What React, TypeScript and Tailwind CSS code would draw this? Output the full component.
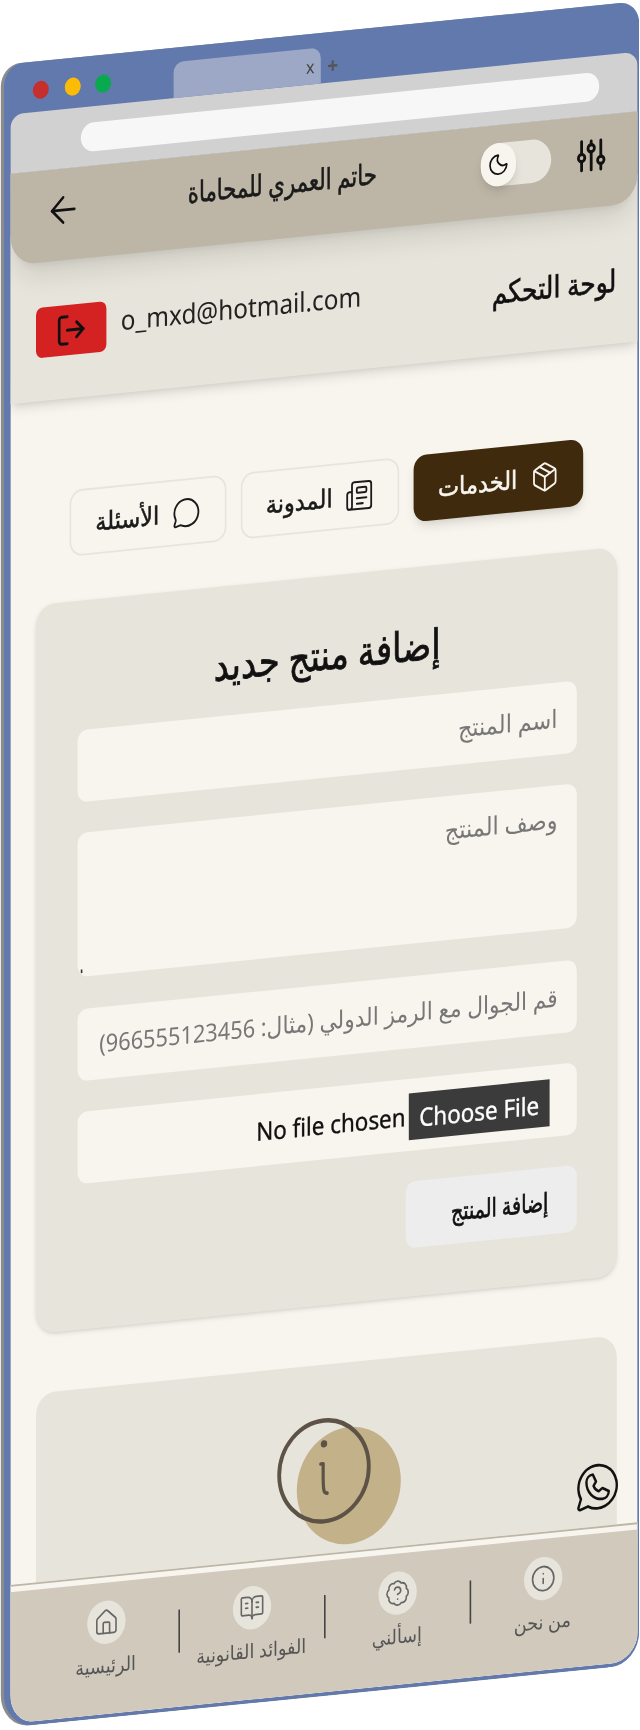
import { ArrowLeft, Moon, LogOut, Package, Newspaper, MessageCircle, House, BookOpenText, BadgeQuestionMark, Info } from "lucide-react";
import { PiWhatsappLogoLight } from "react-icons/pi";

const ar = "font-['Noto_Sans','DejaVu_Sans',sans-serif]";

function Tab({ icon, label, active, w }: { icon: React.ReactNode; label: string; active?: boolean; w: string }) {
  return (
    <div className={`flex h-[37px] items-center justify-center gap-2 rounded-lg ${w} ${active ? "bg-[#3f2a0e] text-[#f8f5ee] shadow-md" : "border border-[#e7e4db] text-[#1a1a1a]"}`}>
      {icon}
      <span className="text-[14px] [-webkit-text-stroke:0.3px_currentColor]">{label}</span>
    </div>
  );
}

function NavItem({ icon, label }: { icon: React.ReactNode; label: string }) {
  return (
    <div className="relative flex w-[90px] flex-col items-center">
      <div className="flex h-6 w-6 items-center justify-center rounded-full bg-[#e7e4db] text-[#666]">{icon}</div>
      <span className="text-[11px] leading-[24px] text-[#555]">{label}</span>
    </div>
  );
}

export default function App() {
  return (
    <div className="relative h-[1730px] w-[640px] overflow-hidden bg-white [filter:blur(0.3px)]">
      <div
        dir="rtl"
        className={`relative flex h-[924px] w-[397px] origin-top-left flex-col overflow-hidden rounded-t-[12px] rounded-b-[18px] border-r border-b-2 border-l-[4px] border-[#6279ad] bg-[#6279ad] shadow-[-2px_0_0_0_#8c8c8c] ${ar} [transform:matrix(1.6,-0.16,0,1.8,4,64.7)]`}
      >
        <div dir="ltr" className="relative h-[28px] shrink-0">
          <div className="absolute top-[11px] left-[14px] flex gap-[9.5px]">
            <span className="h-[10px] w-[10px] rounded-full bg-[#c5302f]" />
            <span className="h-[10px] w-[10px] rounded-full bg-[#fcbc05]" />
            <span className="h-[10px] w-[10px] rounded-full bg-[#0aa84f]" />
          </div>
          <div className="absolute top-[8px] left-[102px] flex h-[20px] w-[92px] items-center justify-end rounded-t-md bg-[#9ca8c5] pr-[4px] text-[10px] text-[#444]">x</div>
          <span className="absolute top-[10px] left-[198px] text-[12px] font-bold text-[#555]">+</span>
        </div>
        <div dir="ltr" className="flex h-[33px] shrink-0 items-start rounded-t-lg bg-[#d1d1d1] pt-[9px] pr-[24px] pl-[44px]">
          <div className="h-4 w-full rounded-full bg-[#f7f7f7]" />
        </div>
        <div className="relative flex flex-1 flex-col bg-[#f8f5ee]">
          <div dir="ltr" className="relative z-10 flex h-[51px] shrink-0 items-start rounded-b-2xl bg-[#bdb5a6] pt-[10px] shadow-lg">
            <ArrowLeft size={24} strokeWidth={1.5} className="absolute top-[11px] left-[21px] text-[#111]" />
            <div dir="rtl" className="absolute top-[8px] left-[99px] w-[130px] origin-right scale-x-[0.83] text-right text-[16px] leading-[24px] whitespace-nowrap text-[#1a1a1a] [-webkit-text-stroke:0.35px_currentColor]">حاتم العمري للمحاماة</div>
            <div className="absolute top-[10px] left-[294px] flex h-6 w-11 items-center rounded-full bg-[#e7e4db]">
              <div className="flex h-6 w-[22px] items-center justify-center rounded-full bg-[#f8f5ee] shadow-md">
                <Moon size={14} strokeWidth={1.75} className="text-[#111]" />
              </div>
            </div>
            <svg className="absolute top-[10px] left-[351px] text-[#111]" width="24" height="24" viewBox="0 0 24 24" fill="none" stroke="currentColor" strokeWidth="1.75" strokeLinecap="round">
              <path d="M6 4v7M6 15v5M12 4v2M12 10v10M18 4v9M18 17v3" />
              <circle cx="6" cy="13" r="2" />
              <circle cx="12" cy="8" r="2" />
              <circle cx="18" cy="15" r="2" />
            </svg>
          </div>
          <div className="-mt-4 flex h-[93px] shrink-0 items-end bg-[#e7e4db] shadow-md">
            <div className="flex h-[77px] w-full items-center justify-between pr-[13px] pl-4">
              <span className="mt-[6px] origin-right scale-x-[0.92] text-[17px] whitespace-nowrap text-[#111] [-webkit-text-stroke:0.35px_currentColor]">لوحة التحكم</span>
              <div dir="ltr" className="flex flex-row-reverse items-center gap-[9px]">
                <span className="-mt-1 text-[15.2px] text-[#222]">o_mxd@hotmail.com</span>
                <div className="flex h-7 w-11 items-center justify-center rounded-sm bg-[#d42222]">
                  <LogOut size={20} className="text-[#111]" />
                </div>
              </div>
            </div>
          </div>
          <div className="mt-[51px] flex shrink-0 justify-center gap-[9px] pl-[3px]">
            <Tab active w="w-[106px]" label="الخدمات" icon={<Package size={18} strokeWidth={1.5} />} />
            <Tab w="w-[99px]" label="المدونة" icon={<Newspaper size={18} strokeWidth={1.5} />} />
            <Tab w="w-[98px]" label="الأسئلة" icon={<MessageCircle size={18} strokeWidth={1.5} />} />
          </div>
          <div className="mt-[25px] mr-[13px] ml-4 flex h-[405px] shrink-0 flex-col rounded-xl bg-[#e7e4db] pr-[25px] pl-[26px] shadow-sm">
            <h2 className="mt-[28px] scale-x-[0.92] text-center text-[23px] leading-[30px] text-[#111] [-webkit-text-stroke:0.45px_currentColor]">إضافة منتج جديد</h2>
            <input readOnly placeholder="اسم المنتج" className="mt-[13.5px] h-10 w-full rounded-md bg-[#f8f5ee] px-3 text-[14px] outline-none placeholder:text-[#777]" />
            <div className="relative mt-[17.5px] h-20 w-full">
              <textarea readOnly placeholder="وصف المنتج" className="h-20 w-full resize-none rounded-md bg-[#f8f5ee] px-3 py-2 text-[14px] outline-none placeholder:text-[#777]" />
              <span className="absolute bottom-[2px] left-[2px] h-[2px] w-[1px] bg-[#333]" />
            </div>
            <input readOnly placeholder="قم الجوال مع الرمز الدولي (مثال: 966555123456)" className="mt-[17.5px] h-10 w-full rounded-md bg-[#f8f5ee] pr-3 pl-1 text-[13.6px] outline-none placeholder:text-[#777]" />
            <div className="mt-[17.5px] flex h-10 w-full items-start gap-[2px] rounded-md bg-[#f8f5ee] px-[17px] pt-[8px]">
              <span className="flex h-[26px] w-[88px] items-center justify-center bg-[#3b3b3b] text-[14px] text-white [-webkit-text-stroke:0.2px_currentColor]">Choose File</span>
              <span className="text-[14px] leading-[26px] text-[#111] [-webkit-text-stroke:0.2px_currentColor]">No file chosen</span>
            </div>
            <div className="mt-[17px] flex h-[37px] w-[107px] items-center justify-center rounded-md bg-[#ededed] pl-[10px] text-[#111]">
              <span className="scale-x-[0.85] text-[14px] whitespace-nowrap [-webkit-text-stroke:0.4px_currentColor]">إضافة المنتج</span>
            </div>
          </div>
          <div className="relative mt-[33px] mr-[13px] ml-4 flex-1 rounded-t-xl bg-[#e7e4db]">
            <div dir="ltr" className="absolute top-[36px] left-[163px] h-[65px] w-[65px] rounded-full bg-[#c3b189]" />
            <svg className="absolute top-[28.5px] left-[150px] text-[#5c5346]" width="60" height="60" viewBox="0 0 60 60" fill="none" stroke="currentColor" strokeWidth="2.4" strokeLinecap="round" strokeLinejoin="round">
              <circle cx="30" cy="30" r="28" />
              <path d="M30 15h.01" strokeWidth="4" />
              <path d="M28 26h1.5c0 5 -.3 12 .5 15c.3 1 1 1.5 2 1.5" strokeWidth="2" />
            </svg>
          </div>
          <div className="absolute right-[9px] bottom-[83px] text-[#111]">
            <PiWhatsappLogoLight size={32} />
          </div>
          <div className="relative z-10 shrink-0 border-t border-[#bdb5a6] bg-[#f8f5ee] pt-[3px]">
            <div dir="ltr" className="flex h-[73px] flex-row-reverse justify-center bg-[#d0c9bc] pt-[10px]">
              <NavItem label="من نحن" icon={<Info size={16} strokeWidth={1.5} />} />
              <span className="mt-[9px] h-6 w-px bg-[#444]" />
              <NavItem label="إسألني" icon={<BadgeQuestionMark size={16} strokeWidth={1.5} />} />
              <span className="mt-[9px] h-6 w-px bg-[#444]" />
              <NavItem label="الفوائد القانونية" icon={<BookOpenText size={16} strokeWidth={1.5} />} />
              <span className="mt-[9px] h-6 w-px bg-[#444]" />
              <NavItem label="الرئيسية" icon={<House size={16} strokeWidth={1.5} />} />
            </div>
          </div>
        </div>
      </div>
    </div>
  );
}
